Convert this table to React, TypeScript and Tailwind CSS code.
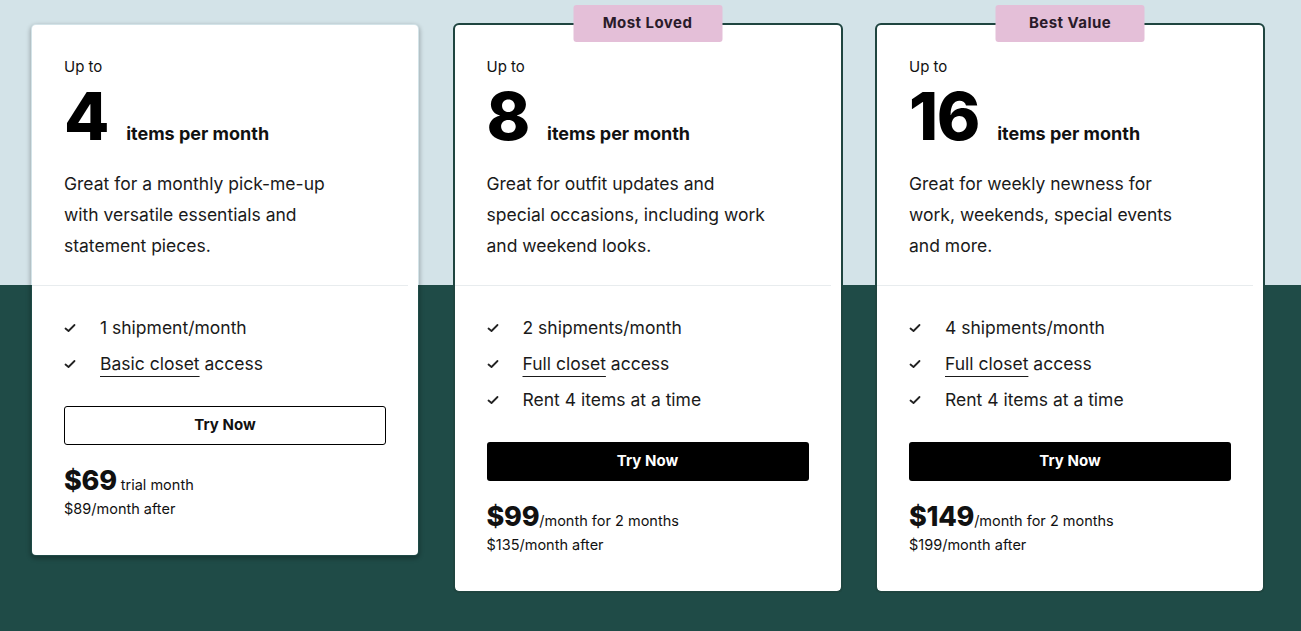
import React from "react";

interface Plan {
  count: string;
  description: string[];
  features: { text: string; underline?: string }[];
  badge?: string;
  featured: boolean;
  price: string;
  priceNote: string;
  after: string;
}

const plans: Plan[] = [
  {
    count: "4",
    description: ["Great for a monthly pick-me-up", "with versatile essentials and", "statement pieces."],
    features: [{ text: "1 shipment/month" }, { underline: "Basic closet", text: " access" }],
    featured: false,
    price: "$69",
    priceNote: "trial month",
    after: "$89/month after",
  },
  {
    count: "8",
    description: ["Great for outfit updates and", "special occasions, including work", "and weekend looks."],
    features: [
      { text: "2 shipments/month" },
      { underline: "Full closet", text: " access" },
      { text: "Rent 4 items at a time" },
    ],
    badge: "Most Loved",
    featured: true,
    price: "$99",
    priceNote: "/month for 2 months",
    after: "$135/month after",
  },
  {
    count: "16",
    description: ["Great for weekly newness for", "work, weekends, special events", "and more."],
    features: [
      { text: "4 shipments/month" },
      { underline: "Full closet", text: " access" },
      { text: "Rent 4 items at a time" },
    ],
    badge: "Best Value",
    featured: true,
    price: "$149",
    priceNote: "/month for 2 months",
    after: "$199/month after",
  },
];

function Check() {
  return (
    <svg width="12" height="10" viewBox="0 0 12 10" fill="none" className="shrink-0">
      <path d="M1.5 5.5 L4.5 8 L10.5 2" stroke="#222" strokeWidth="1.8" strokeLinecap="round" strokeLinejoin="round" />
    </svg>
  );
}

function PlanCard({ plan }: { plan: Plan }) {
  return (
    <div
      className={
        "relative w-[390px] rounded-md border-2 bg-white bg-clip-padding " +
        (plan.featured ? "border-[#1f4540]" : "border-transparent shadow-[0_2px_4px_rgba(0,0,0,0.25)]")
      }
    >
      {plan.badge && (
        <div className="absolute left-1/2 top-[-20px] flex h-[37px] w-[149px] -translate-x-1/2 items-center justify-center rounded-[3px] bg-[#e4bfd8] text-[15px] font-bold tracking-[0.03em] text-[#2a1b2a]">
          {plan.badge}
        </div>
      )}

      {/* Top: count + description */}
      <div className="px-8 pt-8 pb-6">
        <div className="text-[15px] leading-5 text-[#111]">Up to</div>
        <div className="mt-[3px] flex items-baseline">
          <span className="text-[66px] font-extrabold leading-[72px] tracking-[-0.02em] text-black">{plan.count}</span>
          <span className="ml-[18px] text-[18px] font-bold text-[#111]">items per month</span>
        </div>
        <div className="mt-4 text-[17.5px] leading-[31px] text-[#1a1a1a]">
          {plan.description.map((line) => (
            <div key={line}>{line}</div>
          ))}
        </div>
      </div>

      <div className="mr-[10px] h-px bg-[#e8ecee]" />

      {/* Bottom: features, button, price */}
      <div className="px-8 pt-6 pb-[36px]">
        <ul className="flex flex-col">
          {plan.features.map((f, i) => (
            <li key={i} className="flex h-9 items-center gap-6 text-[17.5px] text-[#1a1a1a]">
              <Check />
              <span>
                {f.underline && (
                  <span className="underline decoration-1 underline-offset-[6px]">{f.underline}</span>
                )}
                {f.text}
              </span>
            </li>
          ))}
        </ul>

        <button
          className={
            "mt-6 flex h-[39px] w-full items-center justify-center rounded-[3px] text-[15px] font-bold " +
            (plan.featured ? "bg-black text-white" : "border border-black bg-white text-[#111]")
          }
        >
          Try Now
        </button>

        <div className="mt-5 flex items-baseline text-[#111]">
          <span className="text-[27px] font-extrabold leading-8 tracking-[-0.01em]">{plan.price}</span>
          <span className={"text-[14.5px] " + (plan.featured ? "" : "ml-1")}>{plan.priceNote}</span>
        </div>
        <div className="mt-[2px] text-[14.5px] leading-5 text-[#111]">{plan.after}</div>
      </div>
    </div>
  );
}

export default function App() {
  return (
    <div
      className="h-[631px] w-full overflow-hidden bg-[linear-gradient(to_bottom,#d3e3e8_285px,#1f4b47_285px)]"
      style={{ fontFamily: "Inter, 'Noto Sans', sans-serif" }}
    >
      <div className="flex items-start gap-[32.5px] pl-[30px] pt-[23px]">
        {plans.map((p) => (
          <PlanCard key={p.count} plan={p} />
        ))}
      </div>
    </div>
  );
}
